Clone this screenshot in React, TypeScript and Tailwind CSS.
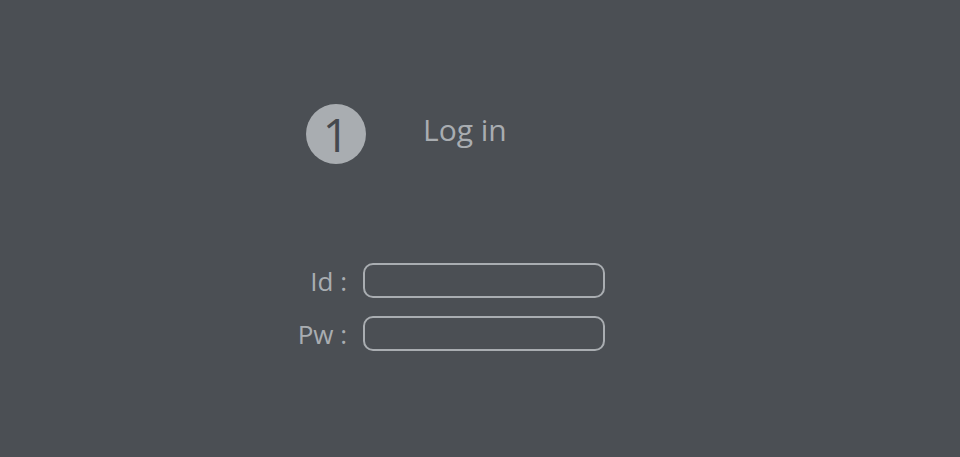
export default function App() {
  return (
    <div
      className="w-[960px] h-[457px] bg-[#4b4f54] text-[#a9adb1] overflow-hidden"
      style={{ fontFamily: '"Open Sans", "Noto Sans", sans-serif' }}
    >
      <div className="pt-[104px] pl-[306px] flex items-center">
        <div className="w-[60px] h-[60px] rounded-full bg-[#a9adb1] text-[#45494e] flex items-center justify-center text-[46px] leading-none">
          <span className="-mt-[1px]">1</span>
        </div>
        <div className="ml-[57px] text-[30px] leading-none -mt-[8px]">Log in</div>
      </div>
      <div className="mt-[99px] pl-[280px] flex flex-col gap-[18px]">
        <div className="flex items-center">
          <label className="w-[67px] text-right text-[26px] leading-none">Id :</label>
          <div className="ml-[16px] w-[242px] h-[35px] rounded-[10px] border-[2.5px] border-[#a9adb1]" />
        </div>
        <div className="flex items-center">
          <label className="w-[67px] text-right text-[26px] leading-none">Pw :</label>
          <div className="ml-[16px] w-[242px] h-[35px] rounded-[10px] border-[2.5px] border-[#a9adb1]" />
        </div>
      </div>
    </div>
  );
}
